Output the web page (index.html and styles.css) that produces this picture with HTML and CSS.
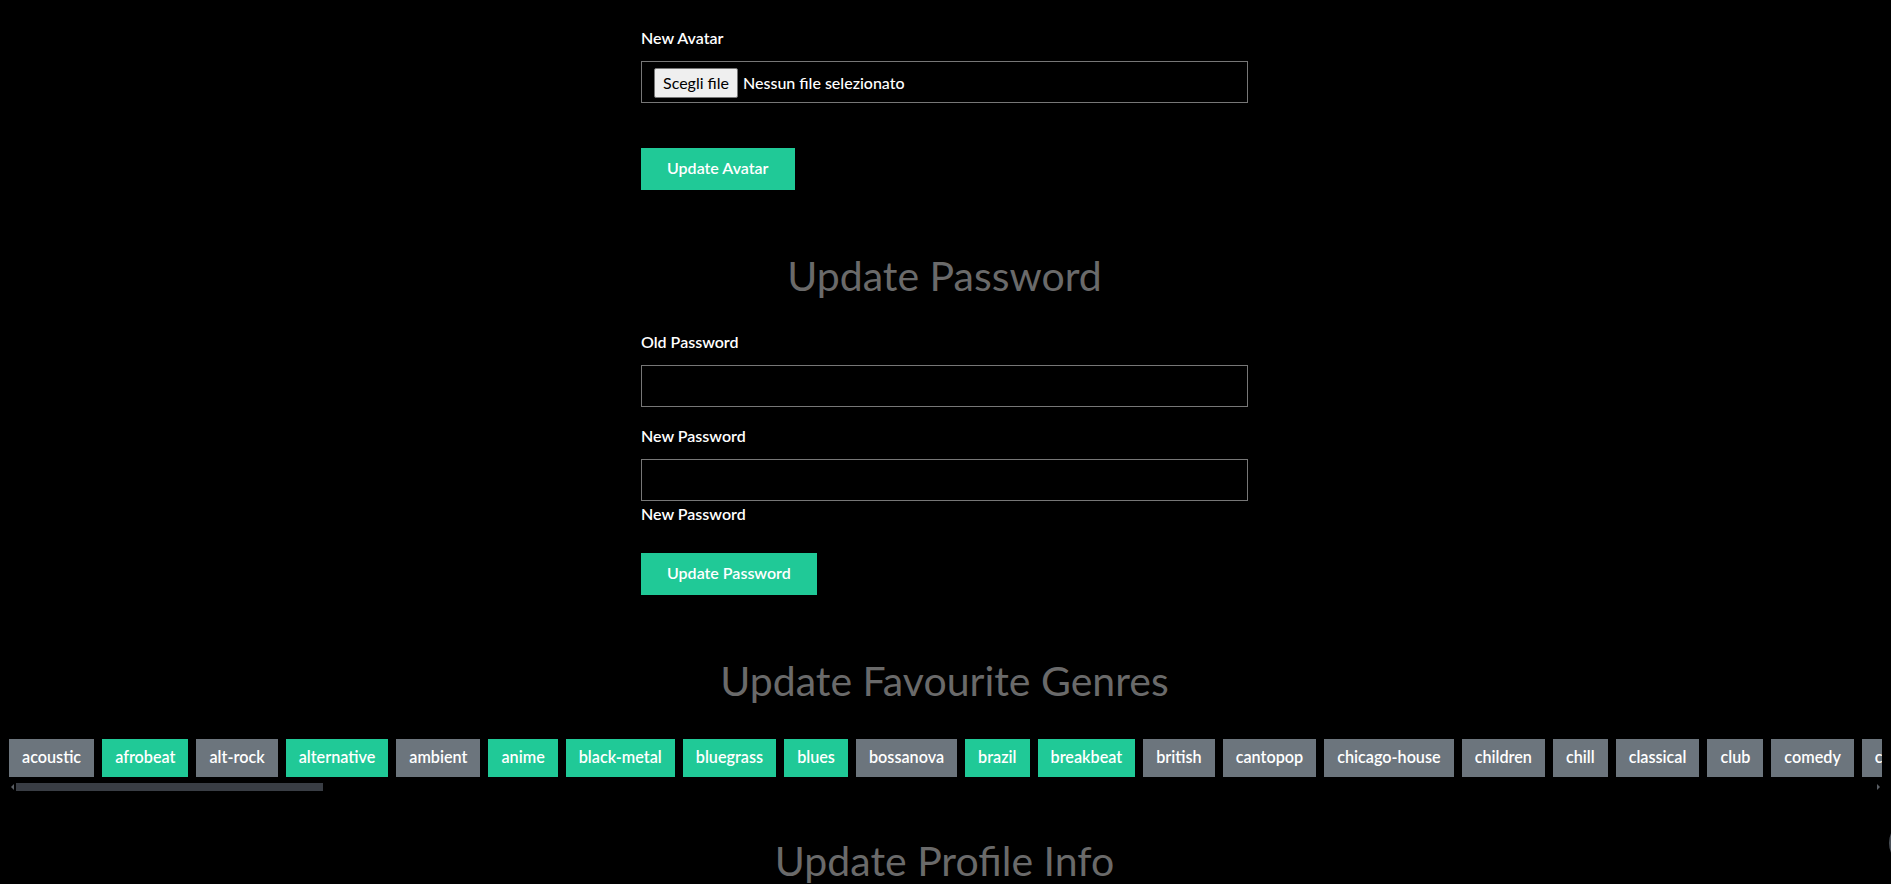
FILE: index.html
```html
<!DOCTYPE html>
<html lang="it">
<head>
<meta charset="utf-8">
<title>Profile settings</title>
<link rel="stylesheet" href="styles.css">
</head>
<body>
<section class="form-section">
  <label class="field-label">New Avatar</label>
  <div class="file-box">
    <button type="button" class="file-btn">Scegli file</button>
    <span class="file-name">Nessun file selezionato</span>
  </div>
  <button type="button" class="btn-primary btn-avatar">Update Avatar</button>
</section>

<section class="form-section">
  <h2 class="section-title">Update Password</h2>
  <label class="field-label">Old Password</label>
  <input class="text-input" type="password">
  <label class="field-label">New Password</label>
  <input class="text-input tight" type="password">
  <div class="field-label help">New Password</div>
  <button type="button" class="btn-primary btn-password">Update Password</button>
</section>

<section class="genres-section">
  <h2 class="section-title">Update Favourite Genres</h2>
  <div class="genre-row" id="genres">
    <button class="chip">acoustic</button>
    <button class="chip on">afrobeat</button>
    <button class="chip">alt-rock</button>
    <button class="chip on">alternative</button>
    <button class="chip">ambient</button>
    <button class="chip on">anime</button>
    <button class="chip on">black-metal</button>
    <button class="chip on">bluegrass</button>
    <button class="chip on">blues</button>
    <button class="chip">bossanova</button>
    <button class="chip on">brazil</button>
    <button class="chip on">breakbeat</button>
    <button class="chip">british</button>
    <button class="chip">cantopop</button>
    <button class="chip">chicago-house</button>
    <button class="chip">children</button>
    <button class="chip">chill</button>
    <button class="chip">classical</button>
    <button class="chip">club</button>
    <button class="chip">comedy</button>
    <button class="chip">country</button>
    <button class="chip">dance</button>
    <button class="chip">dancehall</button>
    <button class="chip">death-metal</button>
    <button class="chip">deep-house</button>
    <button class="chip">detroit-techno</button>
    <button class="chip">disco</button>
    <button class="chip">disney</button>
    <button class="chip">drum-and-bass</button>
    <button class="chip">dub</button>
    <button class="chip">dubstep</button>
    <button class="chip">edm</button>
    <button class="chip">electro</button>
    <button class="chip">electronic</button>
    <button class="chip">emo</button>
    <button class="chip">folk</button>
    <button class="chip">forro</button>
    <button class="chip">french</button>
    <button class="chip">funk</button>
    <button class="chip">garage</button>
    <button class="chip">german</button>
    <button class="chip">gospel</button>
    <button class="chip">goth</button>
    <button class="chip">grindcore</button>
    <button class="chip">groove</button>
    <button class="chip">grunge</button>
    <button class="chip">guitar</button>
    <button class="chip">happy</button>
    <button class="chip">hard-rock</button>
    <button class="chip">hardcore</button>
    <button class="chip">hardstyle</button>
    <button class="chip">heavy-metal</button>
    <button class="chip">hip-hop</button>
    <button class="chip">holidays</button>
    <button class="chip">honky-tonk</button>
    <button class="chip">house</button>
    <button class="chip">idm</button>
    <button class="chip">indian</button>
    <button class="chip">indie</button>
    <button class="chip">indie-pop</button>
    <button class="chip">industrial</button>
    <button class="chip">iranian</button>
    <button class="chip">j-dance</button>
    <button class="chip">j-idol</button>
    <button class="chip">j-pop</button>
    <button class="chip">j-rock</button>
    <button class="chip">jazz</button>
    <button class="chip">k-pop</button>
    <button class="chip">kids</button>
    <button class="chip">latin</button>
    <button class="chip">latino</button>
    <button class="chip">malay</button>
    <button class="chip">mandopop</button>
    <button class="chip">metal</button>
    <button class="chip">metal-misc</button>
    <button class="chip">metalcore</button>
    <button class="chip">minimal-techno</button>
    <button class="chip">movies</button>
    <button class="chip">mpb</button>
    <button class="chip">new-age</button>
    <button class="chip">new-release</button>
    <button class="chip">opera</button>
    <button class="chip">pagode</button>
    <button class="chip">party</button>
    <button class="chip">philippines-opm</button>
    <button class="chip">piano</button>
    <button class="chip">pop</button>
    <button class="chip">pop-film</button>
    <button class="chip">post-dubstep</button>
    <button class="chip">power-pop</button>
    <button class="chip">progressive-house</button>
    <button class="chip">psych-rock</button>
    <button class="chip">punk</button>
    <button class="chip">punk-rock</button>
    <button class="chip">r-n-b</button>
    <button class="chip">rainy-day</button>
    <button class="chip">reggae</button>
    <button class="chip">reggaeton</button>
    <button class="chip">road-trip</button>
    <button class="chip">rock</button>
    <button class="chip">rock-n-roll</button>
    <button class="chip">rockabilly</button>
    <button class="chip">romance</button>
    <button class="chip">sad</button>
    <button class="chip">salsa</button>
    <button class="chip">samba</button>
    <button class="chip">sertanejo</button>
    <button class="chip">show-tunes</button>
    <button class="chip">singer-songwriter</button>
    <button class="chip">ska</button>
    <button class="chip">sleep</button>
    <button class="chip">songwriter</button>
    <button class="chip">soul</button>
    <button class="chip">soundtracks</button>
    <button class="chip">spanish</button>
    <button class="chip">study</button>
    <button class="chip">summer</button>
    <button class="chip">swedish</button>
    <button class="chip">synth-pop</button>
    <button class="chip">tango</button>
    <button class="chip">techno</button>
    <button class="chip">trance</button>
    <button class="chip">trip-hop</button>
    <button class="chip">turkish</button>
    <button class="chip">work-out</button>
    <button class="chip">world-music</button>
  </div>
  <div class="scrollbar" aria-hidden="true">
    <span class="arrow arrow-left"></span>
    <div class="track"><div class="thumb" style="width: 307px"></div></div>
    <span class="arrow arrow-right"></span>
  </div>
</section>

<section class="form-section">
  <h2 class="section-title profile-title">Update Profile Info</h2>
  <label class="field-label">Username</label>
  <input class="text-input" type="text">
  <label class="field-label">Email</label>
  <input class="text-input" type="email">
  <button type="button" class="btn-primary btn-password">Update Profile</button>
</section>

<div class="float-circle" aria-hidden="true"></div>
</body>
</html>
```

FILE: styles.css
```css
* {
  box-sizing: border-box;
}

html,
body {
  background: #000;
}

body {
  margin: 0;
  padding: 26px 9px 40px 7px;
  font-family: "Lato", "Noto Sans", sans-serif;
  color: #fff;
  overflow-x: hidden;
}

.form-section {
  width: 607px;
  margin: 0 auto;
}

.field-label {
  display: block;
  font-size: 16px;
  line-height: 24px;
  font-weight: 600;
  color: #fff;
  margin-bottom: 11px;
}

.field-label.help {
  margin-top: 1px;
  margin-bottom: 27px;
}

.file-box {
  display: flex;
  align-items: center;
  gap: 5px;
  height: 42px;
  padding: 6px 12px 4px;
  border: 1px solid #777;
  background: #000;
}

.file-btn {
  height: 30px;
  padding: 0 8px 2px;
  font-family: inherit;
  font-size: 16px;
  font-weight: 400;
  color: #000;
  background: #efefef;
  border: 1px solid #767676;
  border-radius: 2px;
}

.file-name {
  padding-bottom: 2px;
  font-size: 16px;
  font-weight: 500;
  color: #fff;
}

.btn-primary {
  display: block;
  height: 42px;
  padding: 0 26px 3px;
  border: 0;
  background: #20c997;
  color: #fff;
  font-family: inherit;
  font-size: 16px;
  font-weight: 600;
}

.btn-avatar {
  margin-top: 45px;
}

.section-title {
  margin: 61.5px 0 30.5px;
  font-size: 41px;
  line-height: 48px;
  font-weight: 400;
  color: #6a6a6a;
  text-align: center;
}

.profile-title {
  margin-top: 45.5px;
}

.text-input {
  display: block;
  width: 100%;
  height: 42px;
  margin: 0 0 17px;
  border: 1px solid #777;
  background: #000;
  color: #fff;
  font-family: inherit;
  font-size: 16px;
  padding: 0 12px;
}

.text-input.tight {
  margin-bottom: 0;
}

.genres-section .section-title {
  margin-bottom: 34.5px;
}

.genre-row {
  display: flex;
  gap: 8px;
  padding-left: 2px;
  overflow-x: auto;
  scrollbar-width: none;
}

.chip {
  flex: none;
  height: 38px;
  padding: 0 13px 3px;
  border: 0;
  background: #6c757d;
  color: #fff;
  font-family: inherit;
  font-size: 16.2px;
  font-weight: 600;
  white-space: nowrap;
}

.chip.on {
  background: #20c997;
}

.scrollbar {
  display: flex;
  align-items: center;
  height: 8px;
  margin: 6px 0 0 1px;
}

.arrow {
  flex: none;
  width: 8px;
  height: 8px;
  display: flex;
  align-items: center;
  justify-content: center;
}

.arrow::before {
  content: "";
  border-top: 3px solid transparent;
  border-bottom: 3px solid transparent;
}

.arrow-left::before {
  border-right: 3px solid #5a5e64;
}

.arrow-right::before {
  border-left: 3px solid #5a5e64;
}

.track {
  flex: 1;
  height: 8px;
}

.thumb {
  height: 8px;
  background: #393d44;
}

.float-circle {
  position: fixed;
  top: 819px;
  right: -46px;
  width: 48px;
  height: 48px;
  border-radius: 50%;
  background: #4a5058;
}
```
